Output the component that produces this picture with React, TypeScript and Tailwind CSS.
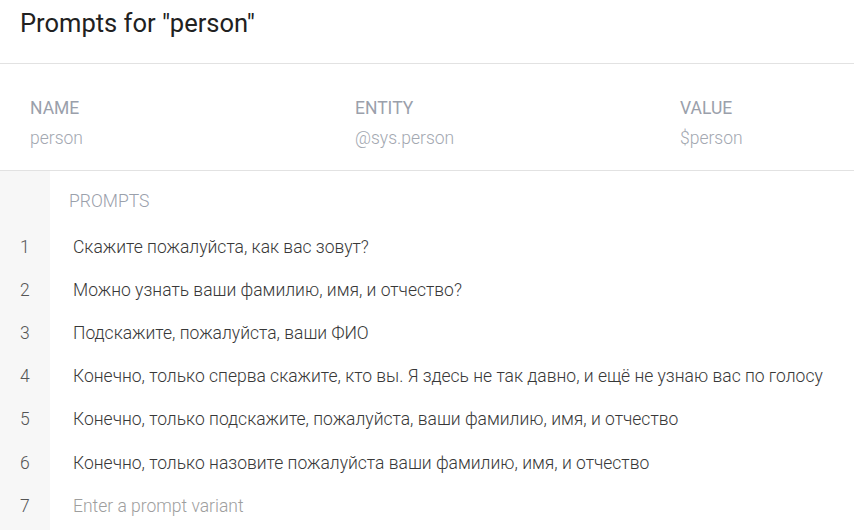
export default function App() {
  const prompts = [
    "Скажите пожалуйста, как вас зовут?",
    "Можно узнать ваши фамилию, имя, и отчество?",
    "Подскажите, пожалуйста, ваши ФИО",
    "Конечно, только сперва скажите, кто вы. Я здесь не так давно, и ещё не узнаю вас по голосу",
    "Конечно, только подскажите, пожалуйста, ваши фамилию, имя, и отчество",
    "Конечно, только назовите пожалуйста ваши фамилию, имя, и отчество",
  ]

  return (
    <div className="flex h-[530px] w-[854px] flex-col overflow-hidden bg-white font-['Roboto',sans-serif]">
      <div className="h-[64px] shrink-0 border-b border-[#e2e2e2] px-5 pt-2">
        <h1 className="text-[25.5px] font-normal leading-[30px] text-[#212121]">Prompts for "person"</h1>
      </div>

      <div className="box-border grid h-[107px] shrink-0 grid-cols-[325px_325px_1fr] border-b border-[#e2e2e2] px-[30px] pt-[33px]">
        {[
          ["NAME", "person"],
          ["ENTITY", "@sys.person"],
          ["VALUE", "$person"],
        ].map(([label, value]) => (
          <div key={label}>
            <div className="text-[17.5px] leading-[22px] text-[#9aa0ab]">{label}</div>
            <div className="mt-[8px] text-[17.5px] font-light leading-[22px] text-[#a3a8b1]">{value}</div>
          </div>
        ))}
      </div>

      <div className="flex flex-1">
        <div className="w-[50px] bg-[#f7f7f7] pt-[54px]">
          {[1, 2, 3, 4, 5, 6, 7].map((n) => (
            <div key={n} className="flex h-[43.2px] items-center pl-[20px] text-[17.5px] font-light leading-[22px] text-[#555]">
              {n}
            </div>
          ))}
        </div>
        <div className="flex-1">
          <div className="h-[54px] pl-[19px] pt-[19px] text-[17.5px] font-light leading-[22px] text-[#9aa0ab]">PROMPTS</div>
          {prompts.map((p) => (
            <div key={p} className="flex h-[43.2px] items-center whitespace-nowrap pl-[23px] text-[17.5px] font-light leading-[22px] text-[#383838]">
              {p}
            </div>
          ))}
          <div className="flex h-[43.2px] items-center pl-[23px] text-[17.5px] font-light leading-[22px] text-[#9e9e9e]">
            Enter a prompt variant
          </div>
        </div>
      </div>
    </div>
  )
}
